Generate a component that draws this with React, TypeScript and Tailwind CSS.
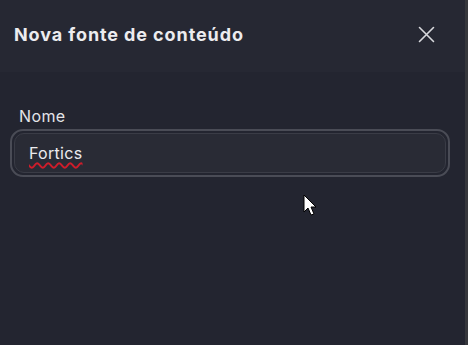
import React from "react";

export default function App() {
  return (
    <div
      className="relative w-[468px] h-[345px] bg-[#232530] overflow-hidden flex"
      style={{ fontFamily: "Inter, 'Noto Sans', sans-serif" }}
    >
      <div className="flex-1 flex flex-col">
        <div className="h-[72px] bg-[#262833] flex items-center justify-between pl-[14px] pr-[30px]">
          <span className="text-[18px] font-bold text-[#ececef] tracking-[0.9px] mt-[-3px]">
            Nova fonte de conteúdo
          </span>
          <svg width="17" height="17" viewBox="0 0 17 17" className="mt-[-3px]">
            <path d="M1.5 1.5 L15.5 15.5 M15.5 1.5 L1.5 15.5" stroke="#d8d9dd" strokeWidth="1.6" strokeLinecap="round" />
          </svg>
        </div>
        <div className="pt-[34px] pl-[10px] pr-[15px] flex flex-col">
          <span className="ml-[9px] text-[16px] text-[#e4e4e8] leading-[20px] tracking-[0.4px]">Nome</span>
          <div className="mt-[3px] h-[48px] rounded-[13px] border-2 border-[#4a4c56] p-[2px]">
            <div className="h-full rounded-[10px] border border-[#3a3c46] bg-[#292b35] flex items-center pl-[14px]">
              <span className="text-[16px] text-[#ececef] tracking-[0.3px] underline decoration-wavy decoration-[#d01c2a] underline-offset-[3px] decoration-[1.5px]">
                Fortics
              </span>
            </div>
          </div>
        </div>
      </div>
      <div className="w-[3px] bg-[#36373c]" />
      <svg className="absolute left-[303px] top-[194px]" width="16" height="24" viewBox="0 0 16 24">
        <path d="M1 1 L1 18 L5 14 L8 21 L11 20 L8 13 L13 13 Z" fill="#ffffff" stroke="#000000" strokeWidth="1" strokeLinejoin="round" />
      </svg>
    </div>
  );
}
